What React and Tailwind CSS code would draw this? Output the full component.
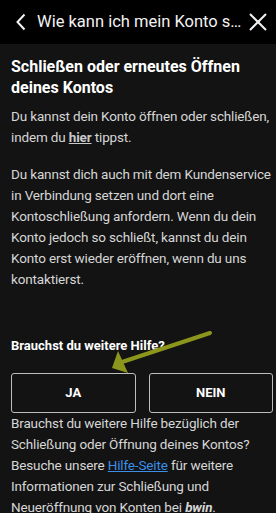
export default function App() {
  return (
    <div
      className="relative w-[276px] h-[513px] overflow-hidden bg-[#131313] text-[#d6d6d6]"
      style={{ fontFamily: 'Roboto, "Noto Sans", sans-serif' }}
    >
      <header className="h-[44px] bg-black flex items-center pl-[15px] pr-[8px]">
        <svg width="12" height="18" viewBox="0 0 12 18" fill="none" className="shrink-0">
          <path d="M9.5 1.5 L2.5 9 L9.5 16.5" stroke="#f2f2f2" strokeWidth="2" />
        </svg>
        <div className="ml-[10px] flex-1 truncate text-[16.5px] text-[#f2f2f2]">
          Wie kann ich mein Konto schließen?
        </div>
        <svg width="20" height="20" viewBox="0 0 20 20" fill="none" className="ml-[2px] shrink-0">
          <path d="M2 2 L18 18 M18 2 L2 18" stroke="#f2f2f2" strokeWidth="2" />
        </svg>
      </header>

      <main className="pl-[11px] pr-[3px] pt-[12px]">
        <h1 className="text-[16px] font-bold leading-[21px] text-white pr-[10px]">
          Schließen oder erneutes Öffnen deines Kontos
        </h1>
        <p className="mt-[8px] text-[13.5px] leading-[21px] tracking-[-0.15px]">
          Du kannst dein Konto öffnen oder schließen, indem du{' '}
          <span className="font-bold underline text-[#c9c9c9]">hier</span> tippst.
        </p>
        <p className="mt-[16px] text-[13.5px] leading-[21px] tracking-[-0.15px]">
          Du kannst dich auch mit dem Kundenservice in Verbindung setzen und dort eine Kontoschließung anfordern.
          Wenn du dein Konto jedoch so schließt, kannst du dein Konto erst wieder eröffnen, wenn du uns
          kontaktierst.
        </p>

        <h2 className="mt-[45px] text-[13px] font-bold leading-[21px] text-white">
          Brauchst du weitere Hilfe?
        </h2>
        <div className="mt-[17px] flex gap-[13px] w-[262px]">
          <button className="flex-1 h-[40px] border border-[#bdbdbd] rounded-[3px] text-[13px] font-bold text-white">
            JA
          </button>
          <button className="flex-1 h-[40px] border border-[#bdbdbd] rounded-[3px] text-[13px] font-bold text-white">
            NEIN
          </button>
        </div>
        <p className="text-[13.5px] leading-[21px] tracking-[-0.15px] pr-[14px]">
          Brauchst du weitere Hilfe bezüglich der Schließung oder Öffnung deines Kontos? Besuche unsere{' '}
          <span className="text-[#3b8fe8] underline">Hilfe-Seite</span> für weitere Informationen zur
          Schließung und Neueröffnung von Konten bei <span className="font-bold italic">bwin</span>.
        </p>
      </main>

      <svg
        className="absolute left-0 top-0 pointer-events-none"
        width="276"
        height="513"
        viewBox="0 0 276 513"
      >
        <line x1="210" y1="333" x2="122" y2="362" stroke="#8c961c" strokeWidth="4" strokeLinecap="round" />
        <polygon points="112,368 118,351 128,373" fill="#8c961c" />
      </svg>
    </div>
  );
}
